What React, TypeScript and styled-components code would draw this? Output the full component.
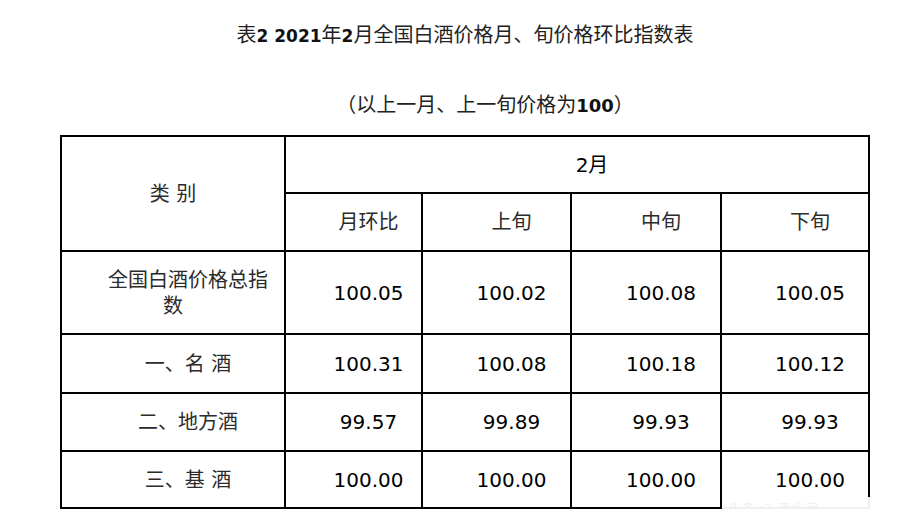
import React from 'react';
import styled, { createGlobalStyle } from 'styled-components';

const GlobalStyle = createGlobalStyle`
  html, body {
    margin: 0;
    padding: 0;
    background: #fff;
  }
  body {
    font-family: "DejaVu Sans", "Noto Sans CJK SC", sans-serif;
    color: #111;
  }
`;

const Page = styled.div`
  position: relative;
  width: 810px;
  padding: 20px 0 0 60px;
`;

const Title = styled.div`
  height: 30px;
  line-height: 30px;
  font-size: 20px;
  text-align: center;
  color: #222;
  white-space: nowrap;
`;

const Subtitle = styled(Title)`
  margin-top: 40px;
  text-indent: 40px;
`;

const Num = styled.span<{ $size: number }>`
  font-family: "DejaVu Sans", sans-serif;
  font-weight: 700;
  font-size: ${p => p.$size}px;
  color: #111;
`;

const Grid = styled.div`
  margin-top: 15px;
  display: grid;
  grid-template-columns: 222px 135px 147px 148px 146px;
  grid-template-rows: 55px 56px 81px 57px 56px 55px;
  gap: 2px;
  padding: 2px;
  background: #000;
  width: 806px;
`;

const Cell = styled.div<{ $indent?: boolean; $cjk?: boolean; $col?: string; $row?: string }>`
  background: #fff;
  display: flex;
  flex-direction: column;
  justify-content: center;
  padding: 0 8px;
  text-align: center;
  text-indent: ${p => (p.$indent ? '30px' : '0')};
  font-size: 20px;
  line-height: 26px;
  color: ${p => (p.$cjk ? '#2b2b2b' : '#000')};
  grid-column: ${p => p.$col ?? 'auto'};
  grid-row: ${p => p.$row ?? 'auto'};
`;

const Watermark = styled.div`
  position: absolute;
  left: 722px;
  top: 497px;
  width: 150px;
  height: 21px;
  background: rgba(255, 255, 255, 0.94);
  color: #efefef;
  font-size: 13px;
  line-height: 21px;
  letter-spacing: 1px;
  padding-left: 6px;
  box-sizing: border-box;
  font-family: "Noto Sans CJK SC", sans-serif;
  white-space: nowrap;
  overflow: hidden;
`;

const rows = [
  { label: '全国白酒价格总指数', values: ['100.05', '100.02', '100.08', '100.05'] },
  { label: '一、名 酒', values: ['100.31', '100.08', '100.18', '100.12'] },
  { label: '二、地方酒', values: ['99.57', '99.89', '99.93', '99.93'] },
  { label: '三、基 酒', values: ['100.00', '100.00', '100.00', '100.00'] },
];

const subHeads = ['月环比', '上旬', '中旬', '下旬'];

export default function App() {
  return (
    <>
      <GlobalStyle />
      <Page>
        <Title>
          表<Num $size={17}>2 2021</Num>年<Num $size={17}>2</Num>月全国白酒价格月、旬价格环比指数表
        </Title>
        <Subtitle>
          （以上一月、上一旬价格为<Num $size={18}>100</Num>）
        </Subtitle>
        <Grid>
          <Cell $cjk $row="1 / span 2">类 别</Cell>
          <Cell $indent $col="2 / span 4">2月</Cell>
          {subHeads.map(h => (
            <Cell key={h} $indent $cjk>{h}</Cell>
          ))}
          {rows.map(r => (
            <React.Fragment key={r.label}>
              <Cell $indent $cjk>{r.label}</Cell>
              {r.values.map((v, i) => (
                <Cell key={i} $indent>{v}</Cell>
              ))}
            </React.Fragment>
          ))}
        </Grid>
        <Watermark>头条 @ 酒业家</Watermark>
      </Page>
    </>
  );
}
